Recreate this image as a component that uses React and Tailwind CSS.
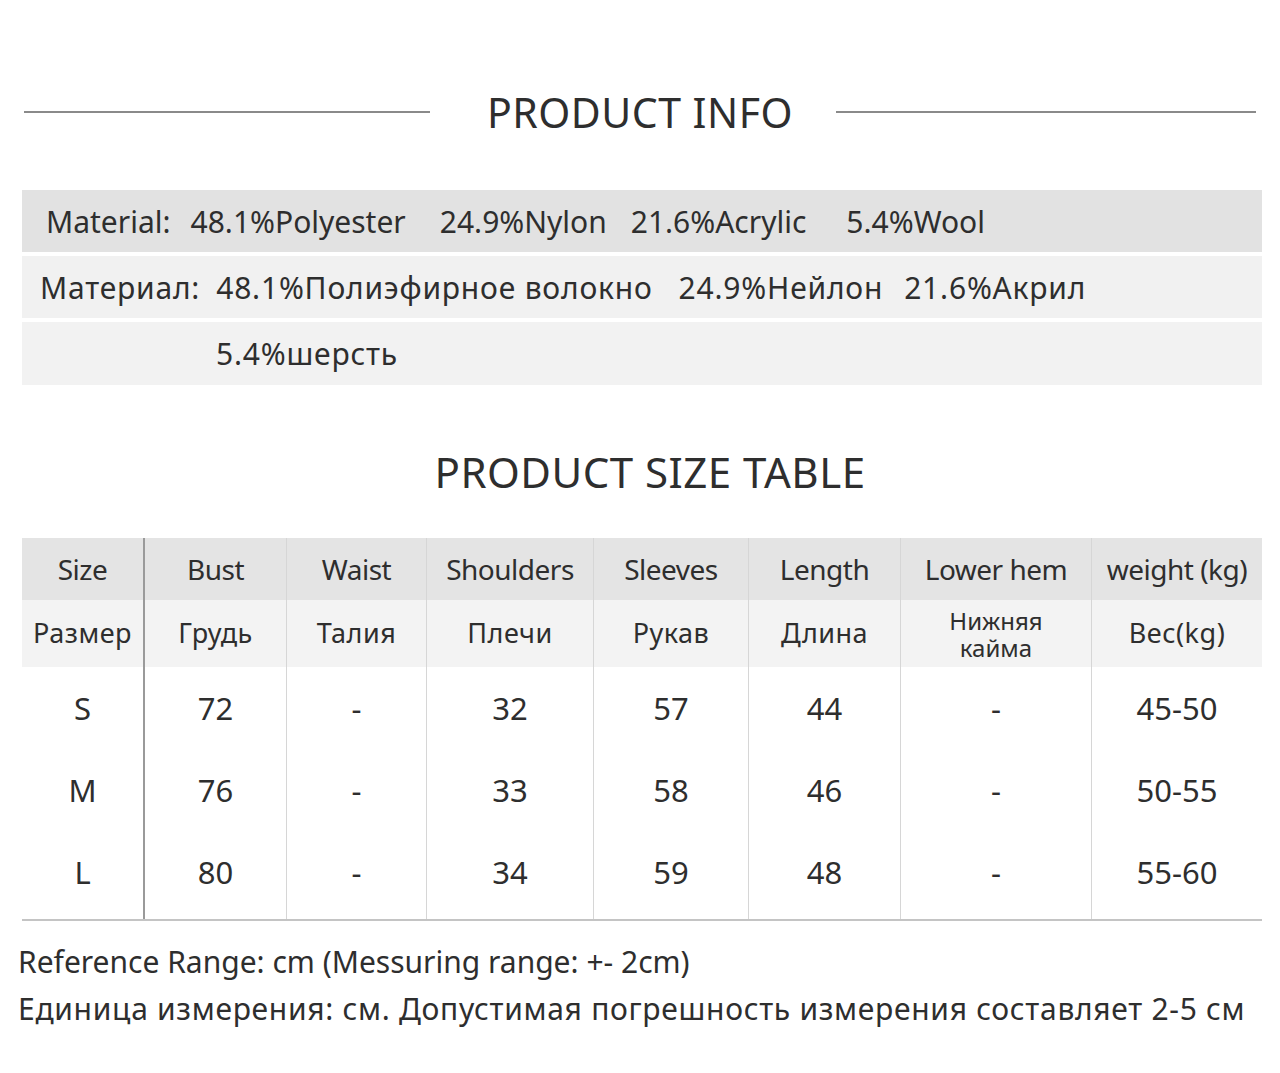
const cols = [
  { w: "w-[121px]", en: "Size", ru: "Размер" },
  { w: "w-[143px]", en: "Bust", ru: "Грудь" },
  { w: "w-[140px]", en: "Waist", ru: "Талия" },
  { w: "w-[167px]", en: "Shoulders", ru: "Плечи" },
  { w: "w-[155px]", en: "Sleeves", ru: "Рукав" },
  { w: "w-[152px]", en: "Length", ru: "Длина" },
  { w: "w-[191px]", en: "Lower hem", ru: "Нижняя кайма" },
  { w: "w-[171px]", en: "weight (kg)", ru: "Вес(kg)" },
];

const rows = [
  ["S", "72", "-", "32", "57", "44", "-", "45-50"],
  ["M", "76", "-", "33", "58", "46", "-", "50-55"],
  ["L", "80", "-", "34", "59", "48", "-", "55-60"],
];

export default function App() {
  return (
    <div className="w-[1280px] h-[1073px] bg-white text-[#2e2e2e] font-['Noto_Sans',sans-serif] pt-[88px]">

      <div className="flex items-center px-[24px] h-[48px]">
        <div className="h-[2px] w-[406px] bg-[#8a8a8a]" />
        <div className="flex-1 text-center text-[41px] tracking-[0.5px] leading-none pl-[14px]">PRODUCT INFO</div>
        <div className="h-[2px] w-[420px] bg-[#8a8a8a]" />
      </div>

      <div className="ml-[22px] w-[1240px] mt-[54px] flex flex-col gap-[4px] text-[30px]">
        <div className="h-[62px] bg-[#e2e2e2] flex items-center pl-[24px] whitespace-nowrap">
          <span>Material:</span>
          <span className="ml-[20px]">48.1%Polyester</span>
          <span className="ml-[34px]">24.9%Nylon</span>
          <span className="ml-[24px]">21.6%Acrylic</span>
          <span className="ml-[40px]">5.4%Wool</span>
        </div>
        <div className="h-[62px] bg-[#f1f1f1] flex items-center pl-[18px] whitespace-nowrap tracking-[0.8px]">
          <span>Материал:</span>
          <span className="ml-[16px]">48.1%Полиэфирное волокно</span>
          <span className="ml-[26px]">24.9%Нейлон</span>
          <span className="ml-[21px]">21.6%Акрил</span>
        </div>
        <div className="h-[63px] bg-[#f2f2f2] flex items-center pl-[194px] tracking-[0.8px]">
          <span>5.4%шерсть</span>
        </div>
      </div>

      <div className="mt-[66px] text-center text-[42px] tracking-[0.5px] leading-none pl-[20px]">PRODUCT SIZE TABLE</div>

      <div className="ml-[22px] w-[1240px] mt-[45px] text-[28px]">
        <div className="flex">
          {cols.map((c, i) => (
            <div key={i} className={`${c.w} shrink-0 flex flex-col ${i > 0 ? (i === 1 ? "border-l-2 border-[#9a9a9a]" : "border-l border-[#d6d6d6]") : ""}`}>
              <div className="h-[62px] bg-[#e4e4e4] flex items-center justify-center whitespace-nowrap tracking-[-0.5px]">{c.en}</div>
              <div className="h-[67px] bg-[#f3f3f3] flex items-center justify-center text-center">
                {c.ru === "Нижняя кайма" ? (
                  <div className="flex flex-col items-center text-[24px] leading-[27px]">
                    <span>Нижняя</span>
                    <span>кайма</span>
                  </div>
                ) : (
                  <span className="text-[27px] tracking-[0.5px]">{c.ru}</span>
                )}
              </div>
              {rows.map((r, j) => (
                <div key={j} className="h-[82px] flex items-center justify-center text-[31px]">{r[i]}</div>
              ))}
              <div className="h-[6px]" />
            </div>
          ))}
        </div>
        <div className="h-[2px] bg-[#c4c4c4]" />
      </div>

      <div className="px-[18px] mt-[17px] text-[30px] leading-[47px] whitespace-nowrap">
        <div>Reference Range: cm (Messuring range: +- 2cm)</div>
        <div className="tracking-[0.7px]">Единица измерения: см. Допустимая погрешность измерения составляет 2-5 см</div>
      </div>
    </div>
  );
}
